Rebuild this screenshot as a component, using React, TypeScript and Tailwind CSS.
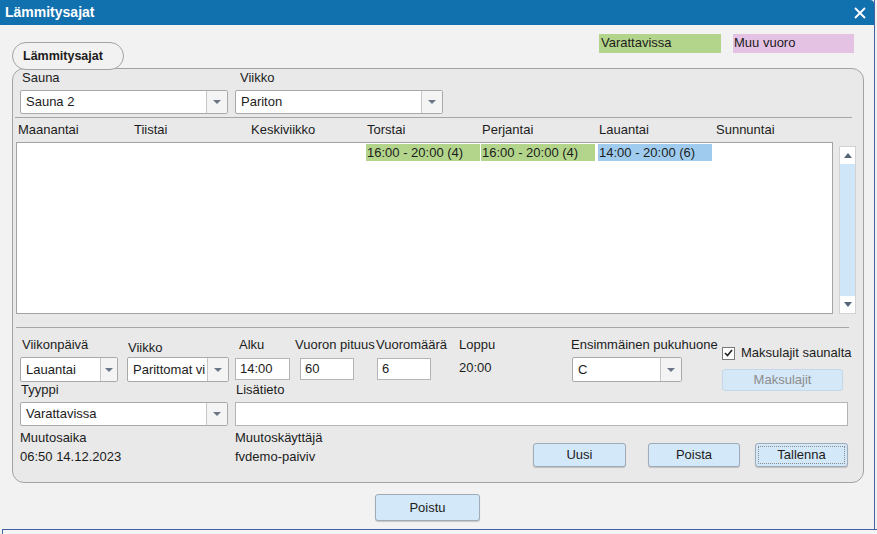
import React from 'react';

type SelectProps = { value: string; className: string; arrowClass?: string };

const DropArrow = () => (
  <svg width="8" height="4" viewBox="0 0 8 4">
    <path d="M0 0h8L4 4z" fill="#6b7789" />
  </svg>
);

const Select: React.FC<SelectProps> = ({ value, className, arrowClass = 'w-[21px]' }) => (
  <div className={`flex border border-[#a9a9a9] bg-white rounded-[2px] ${className}`}>
    <div className="flex-1 pl-[5px] flex items-center overflow-hidden whitespace-nowrap">{value}</div>
    <div className={`flex items-center justify-center border-l border-[#c6c6c6] bg-[#f4f4f4] ${arrowClass}`}>
      <DropArrow />
    </div>
  </div>
);

const Input: React.FC<{ value?: string; className: string }> = ({ value = '', className }) => (
  <div className={`border border-[#b4b4b4] bg-white pl-[4px] flex items-center ${className}`}>{value}</div>
);

const Label: React.FC<{ children: React.ReactNode; className?: string }> = ({ children, className = '' }) => (
  <div className={`h-[16px] leading-[16px] whitespace-nowrap ${className}`}>{children}</div>
);

const Button: React.FC<{ children: React.ReactNode; className: string; focused?: boolean }> = ({
  children,
  className,
  focused,
}) => (
  <div
    className={`flex items-center justify-center rounded-[3px] border border-[#9fabb7] bg-[#d3e8f9] shadow-[0_1px_1px_rgba(0,0,0,0.18)] p-[2px] ${className}`}
  >
    <div
      className={`w-full h-full flex items-center justify-center ${
        focused ? 'border border-dotted border-[#8a8a8a]' : 'border border-transparent'
      }`}
    >
      {children}
    </div>
  </div>
);

const days = ['Maanantai', 'Tiistai', 'Keskiviikko', 'Torstai', 'Perjantai', 'Lauantai', 'Sunnuntai'];

const slots: { day: number; text: string; color: string }[] = [
  { day: 3, text: '16:00 - 20:00 (4)', color: 'bg-[#b3d58b]' },
  { day: 4, text: '16:00 - 20:00 (4)', color: 'bg-[#b3d58b]' },
  { day: 5, text: '14:00 - 20:00 (6)', color: 'bg-[#9fccee]' },
];

const dayCols = 'grid grid-cols-[116px_117px_116px_115px_117px_117px_117px]';

export default function App() {
  return (
    <div className="w-[877px] h-[534px] overflow-hidden bg-[#f2f2f2] text-[13px] text-[#1c1c1c] font-['Liberation_Sans',Arial,sans-serif] flex flex-col">
      <div className="w-[875px] h-[529px] border-r border-[#4263a3] flex flex-col">
        {/* title bar */}
        <div className="h-[25px] bg-[#1170ae] rounded-tr-[4px] flex items-center justify-between pl-[5px] pr-[8px] text-white">
          <span className="font-bold text-[14px]">Lämmitysajat</span>
          <svg width="12" height="12" viewBox="0 0 12 12">
            <path d="M1 1L11 11M11 1L1 11" stroke="#fff" strokeWidth="1.8" />
          </svg>
        </div>

        {/* tab + legend */}
        <div className="h-[43px] flex items-end justify-between pl-[12px] pr-[20px]">
          <div className="relative z-10 mb-[-2px] h-[28px] w-[112px] rounded-full border border-[#a3a3a3] bg-[#f2f2f2] pl-[10px] flex items-center font-bold text-[12.5px]">
            Lämmitysajat
          </div>
          <div className="self-start mt-[9px] flex gap-[12px]">
            <div className="w-[122px] h-[19px] bg-[#b3d58b] pl-[2px] leading-[18px]">Varattavissa</div>
            <div className="w-[121px] h-[19px] bg-[#e4c2e4] pl-[1px] leading-[18px]">Muu vuoro</div>
          </div>
        </div>

        {/* group panel */}
        <div className="ml-[12px] w-[852px] h-[415px] rounded-[12px] border border-[#a3a3a3] bg-[#e9e9e9] flex flex-col">
          <div className="mt-[1px] pl-[7px] flex">
            <div className="w-[215px] flex flex-col">
              <Label className="ml-[2px]">Sauna</Label>
              <Select value="Sauna 2" className="mt-[4px] w-[208px] h-[24px]" />
            </div>
            <div className="flex flex-col">
              <Label className="ml-[5px]">Viikko</Label>
              <Select value="Pariton" className="mt-[4px] w-[208px] h-[24px]" />
            </div>
          </div>

          <div className="mt-[3px] ml-[2px] w-[837px] h-px bg-[#a6a6a6]" />

          <div className={`mt-[4px] ml-[4px] ${dayCols}`}>
            {days.map((d) => (
              <div key={d} className="pl-[1px] h-[16px] leading-[16px]">
                {d}
              </div>
            ))}
          </div>

          <div className="mt-[4px] ml-[3px] flex">
            <div className="w-[817px] h-[172px] border border-[#a3a3a3] bg-white">
              <div className={`mt-[1px] ${dayCols}`}>
                {days.map((d, i) => {
                  const s = slots.find((x) => x.day === i);
                  return (
                    <div key={d} className="h-[17px]">
                      {s && (
                        <div className={`w-[114px] h-[17px] leading-[17px] pl-[1px] whitespace-nowrap ${s.color}`}>
                          {s.text}
                        </div>
                      )}
                    </div>
                  );
                })}
              </div>
            </div>
            <div className="ml-[6px] mt-[4px] w-[17px] h-[168px] border border-[#d2d2d2] flex flex-col">
              <div className="h-[17px] bg-white flex items-center justify-center">
                <svg width="8" height="5" viewBox="0 0 8 5">
                  <path d="M0 5h8L4 0z" fill="#56647a" />
                </svg>
              </div>
              <div className="flex-1 bg-[#cfe6f8]" />
              <div className="h-[17px] bg-white flex items-center justify-center">
                <svg width="8" height="5" viewBox="0 0 8 5">
                  <path d="M0 0h8L4 5z" fill="#56647a" />
                </svg>
              </div>
            </div>
          </div>

          <div className="mt-[13px] ml-[3px] w-[833px] h-px bg-[#a6a6a6]" />

          {/* form row 1 */}
          <div className="mt-[9px] h-[45px] pl-[7px] flex">
            <div className="w-[107px] flex flex-col">
              <Label className="ml-[2px]">Viikonpäivä</Label>
              <Select value="Lauantai" className="mt-[4px] w-[98px] h-[25px]" arrowClass="w-[17px]" />
            </div>
            <div className="w-[108px] flex flex-col">
              <Label className="ml-[1px] mt-[3px]">Viikko</Label>
              <Select value="Parittomat vi" className="mt-[1px] w-[102px] h-[25px]" />
            </div>
            <div className="w-[60px] flex flex-col">
              <Label className="ml-[4px]">Alku</Label>
              <Input value="14:00" className="mt-[5px] w-[55px] h-[22px]" />
            </div>
            <div className="w-[81px] flex flex-col">
              <Label>Vuoron pituus</Label>
              <Input value="60" className="mt-[5px] ml-[5px] w-[54px] h-[22px]" />
            </div>
            <div className="w-[83px] flex flex-col">
              <Label>Vuoromäärä</Label>
              <Input value="6" className="mt-[5px] ml-[1px] w-[54px] h-[22px]" />
            </div>
            <div className="w-[112px] flex flex-col">
              <Label>Loppu</Label>
              <Label className="mt-[7px]">20:00</Label>
            </div>
            <div className="w-[151px] flex flex-col">
              <Label>Ensimmäinen pukuhuone</Label>
              <Select value="C" className="mt-[4px] ml-[1px] w-[110px] h-[25px]" />
            </div>
            <div className="flex flex-col mt-[8px]">
              <div className="flex items-center h-[16px]">
                <div className="w-[13px] h-[13px] border border-[#7a7a7a] bg-white flex items-center justify-center">
                  <svg width="9" height="8" viewBox="0 0 9 8">
                    <path d="M1 4l2.5 2.5L8 1" stroke="#222" strokeWidth="1.6" fill="none" />
                  </svg>
                </div>
                <span className="ml-[6px] whitespace-nowrap">Maksulajit saunalta</span>
              </div>
              <div className="mt-[8px] w-[121px] h-[22px] rounded-[3px] border border-[#c4d7e8] bg-[#d5e8f8] text-[#8c8c8c] flex items-center justify-center">
                Maksulajit
              </div>
            </div>
          </div>

          {/* form row 2 */}
          <div className="pl-[7px] flex">
            <div className="w-[215px] flex flex-col">
              <Label className="ml-[1px]">Tyyppi</Label>
              <Select value="Varattavissa" className="mt-[4px] w-[208px] h-[24px]" />
            </div>
            <div className="flex flex-col">
              <Label className="ml-[1px]">Lisätieto</Label>
              <Input className="mt-[4px] w-[613px] h-[24px]" />
            </div>
          </div>

          {/* form row 3 */}
          <div className="mt-[4px] pl-[7px] flex">
            <div className="w-[215px] flex flex-col">
              <Label>Muutosaika</Label>
              <Label className="mt-[3px]">06:50 14.12.2023</Label>
            </div>
            <div className="w-[298px] flex flex-col">
              <Label>Muutoskäyttäjä</Label>
              <Label className="mt-[3px]">fvdemo-paiviv</Label>
            </div>
            <div className="mt-[13px] flex">
              <Button className="w-[93px] h-[24px]">Uusi</Button>
              <Button className="ml-[22px] w-[92px] h-[24px]">Poista</Button>
              <Button className="ml-[15px] w-[93px] h-[24px]" focused>
                Tallenna
              </Button>
            </div>
          </div>
        </div>

        <div className="mt-[11px] ml-[375px]">
          <Button className="w-[105px] h-[27px]">Poistu</Button>
        </div>
      </div>
      <div className="ml-[2px] flex-1 border-t border-l border-[#4263a3] bg-[#f4f4f4]" />
    </div>
  );
}
